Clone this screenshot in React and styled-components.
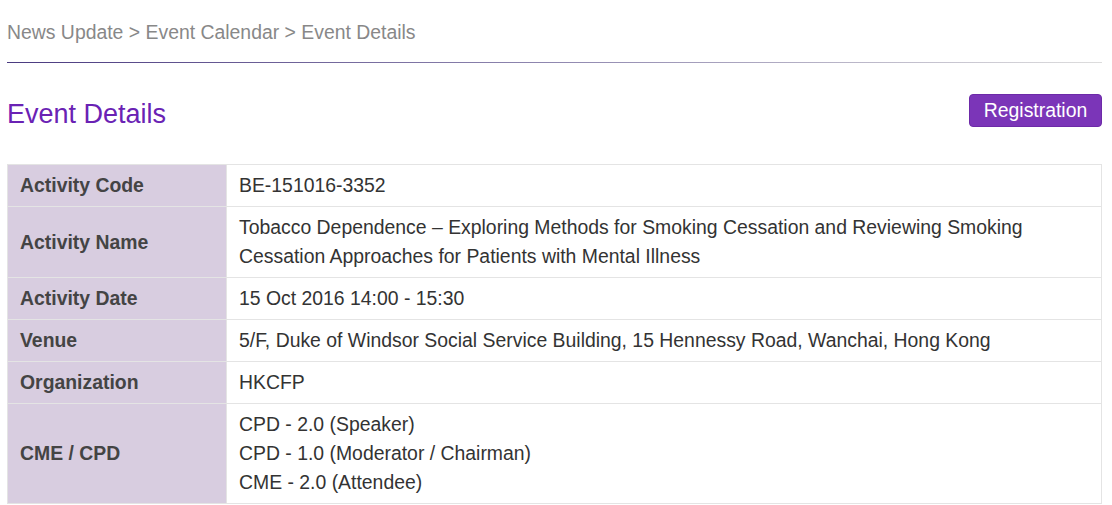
import React from 'react'
import styled, { createGlobalStyle } from 'styled-components'

const GlobalStyle = createGlobalStyle`
  body {
    margin: 0;
    background: #fff;
    font-family: 'Liberation Sans', Arial, sans-serif;
  }
`

const Page = styled.div`
  padding: 0 10px 0 7px;
`

const Breadcrumb = styled.div`
  font-size: 19.4px;
  line-height: 24px;
  color: #888;
  padding-top: 20px;
  padding-bottom: 18px;
`

const Rule = styled.div`
  height: 1px;
  background: linear-gradient(to right, #4a3a80, #9088b0 50%, #dddddd);
`

const Header = styled.div`
  display: flex;
  justify-content: space-between;
  align-items: flex-start;
  padding-top: 31px;
  height: 70px;
`

const Title = styled.h1`
  margin: 5px 0 0;
  font-size: 27px;
  line-height: 30px;
  font-weight: normal;
  color: #6a22b4;
`

const RegButton = styled.button`
  font-family: inherit;
  font-size: 19.4px;
  line-height: 20px;
  color: #fff;
  background: #7b35b8;
  border: 1px solid #6d2aa8;
  border-radius: 4px;
  padding: 5px 13px 6px;
  width: 133px;
  height: 33px;
  cursor: pointer;
`

const Table = styled.table`
  width: 100%;
  border-collapse: collapse;
  font-size: 19.4px;
  line-height: 29px;
`

const Label = styled.th`
  width: 194px;
  background: #d8cde0;
  color: #444;
  text-align: left;
  font-weight: bold;
  padding: 6px 12px;
  border: 1px solid #e4e4e4;
`

const Value = styled.td`
  color: #333;
  padding: 6px 12px;
  border: 1px solid #e4e4e4;
`

const rows = [
  ['Activity Code', ['BE-151016-3352']],
  [
    'Activity Name',
    [
      'Tobacco Dependence \u2013 Exploring Methods for Smoking Cessation and Reviewing Smoking Cessation Approaches for Patients with Mental Illness'
    ]
  ],
  ['Activity Date', ['15 Oct 2016 14:00 - 15:30']],
  ['Venue', ['5/F, Duke of Windsor Social Service Building, 15 Hennessy Road, Wanchai, Hong Kong']],
  ['Organization', ['HKCFP']],
  [
    'CME / CPD',
    ['CPD - 2.0 (Speaker)', 'CPD - 1.0 (Moderator / Chairman)', 'CME - 2.0 (Attendee)']
  ]
]

const App = () => (
  <>
    <GlobalStyle />
    <Page>
      <Breadcrumb>News Update &gt; Event Calendar &gt; Event Details</Breadcrumb>
      <Rule />
      <Header>
        <Title>Event Details</Title>
        <RegButton>Registration</RegButton>
      </Header>
      <Table>
        <tbody>
          {rows.map(([label, lines]) => (
            <tr key={label}>
              <Label>{label}</Label>
              <Value>
                {lines.map((l, i) => (
                  <div key={i}>{l}</div>
                ))}
              </Value>
            </tr>
          ))}
        </tbody>
      </Table>
    </Page>
  </>
)

export default App
